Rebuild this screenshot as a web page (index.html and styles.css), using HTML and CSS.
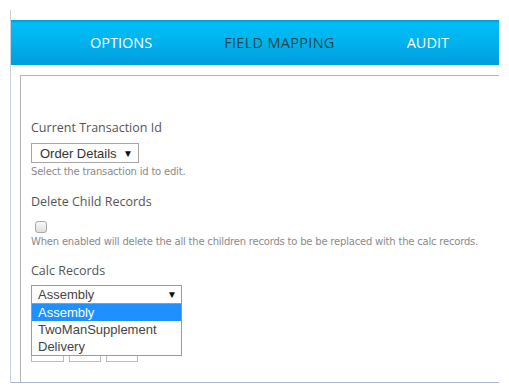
FILE: index.html
```html
<!DOCTYPE html>
<html>
<head>
<meta charset="utf-8">
<link rel="stylesheet" href="styles.css">
</head>
<body>
<div class="frame">
  <nav class="tabs">
    <span class="tab">OPTIONS</span>
    <span class="tab active">FIELD MAPPING</span>
    <span class="tab">AUDIT</span>
  </nav>
  <div class="panel">
    <div class="field">
      <div class="label">Current Transaction Id</div>
      <div class="select small"><span>Order Details</span><span class="arrow">&#9660;</span></div>
      <div class="help">Select the transaction id to edit.</div>
    </div>
    <div class="field">
      <div class="label">Delete Child Records</div>
      <span class="checkbox"></span>
      <div class="help">When enabled will delete the all the children records to be be replaced with the calc records.</div>
    </div>
    <div class="field">
      <div class="label">Calc Records</div>
      <div class="select-wrap">
        <div class="select wide focus"><span>Assembly</span><span class="arrow">&#9660;</span></div>
        <ul class="dropdown">
          <li class="selected">Assembly</li>
          <li>TwoManSupplement</li>
          <li>Delivery</li>
        </ul>
      </div>
    </div>
    <div class="buttons">
      <span class="btn b1"></span>
      <span class="btn b2"></span>
      <span class="btn b3"></span>
    </div>
  </div>
  <span class="scrollmark"></span>
</div>
</body>
</html>
```

FILE: styles.css
```css
html, body {
  margin: 0;
  padding: 0;
  background: #ffffff;
}
body {
  font-family: "Open Sans", "DejaVu Sans", sans-serif;
}
.frame {
  position: relative;
  margin: 10px 0 0 10px;
  width: 488px;
  border-left: 1px solid #c9d3e0;
  border-bottom: 1px solid #aab6cc;
  padding-top: 10px;
  overflow: hidden;
}
.tabs {
  height: 45px;
  display: flex;
  align-items: center;
  gap: 72px;
  padding-left: 79px;
  box-sizing: border-box;
  background: linear-gradient(to bottom, #0399d8 0px, #00bdf8 3px, #00b4ee 20px, #009ddc 45px);
}
.tab {
  font-size: 14.5px;
  color: #ffffff;
}
.tab.active {
  color: #24484f;
  letter-spacing: 0.3px;
}
.panel {
  margin: 10px 0 0 9px;
  border-top: 1px solid #b4b4b4;
  border-left: 1px solid #b4b4b4;
  padding: 43px 10px 20px 10px;
  width: 520px;
}
.field {
  display: flex;
  flex-direction: column;
  align-items: flex-start;
  margin-bottom: 14px;
}
.field:nth-child(2) {
  margin-bottom: 13px;
}
.label {
  font-size: 12.5px;
  line-height: 18px;
  color: #555555;
}
.select {
  margin-top: 6px;
  box-sizing: border-box;
  display: flex;
  align-items: center;
  justify-content: space-between;
  font-family: "Liberation Sans", Arial, sans-serif;
  font-size: 13px;
  color: #333333;
  background: #ffffff;
  border: 1px solid #a6a6a6;
}
.select.small {
  width: 108px;
  height: 20px;
  padding: 0 5px 0 8px;
}
.select.wide {
  width: 151px;
  height: 19px;
  padding: 0 4px 0 6px;
  margin-top: 0;
}
.select.focus {
  border-color: #7b9ed6;
  color: #444444;
}
.arrow {
  font-size: 10px;
  color: #111111;
}
.help {
  margin-top: 2px;
  font-family: "DejaVu Sans", sans-serif;
  font-size: 10px;
  line-height: 14px;
  color: #8a8a8a;
  letter-spacing: -0.2px;
}
.checkbox {
  margin: 10px 0 0 4px;
  width: 12px;
  height: 12px;
  box-sizing: border-box;
  border: 1px solid #a9a9a9;
  border-radius: 3px;
  background: linear-gradient(to bottom, #fafafa, #dedede);
}
.select-wrap {
  position: relative;
  margin-top: 5px;
}
.dropdown {
  position: absolute;
  left: 0;
  top: 100%;
  width: 151px;
  box-sizing: border-box;
  margin: -1px 0 0 0;
  padding: 0;
  list-style: none;
  border: 1px solid #7b9ed6;
  background: #ffffff;
  font-family: "Liberation Sans", Arial, sans-serif;
  font-size: 13px;
  color: #444444;
  z-index: 2;
}
.dropdown li {
  height: 17px;
  line-height: 17px;
  padding-left: 6px;
}
.dropdown li.selected {
  background: #1e90ff;
  color: #ffffff;
}
.buttons {
  display: flex;
  gap: 5px;
  margin-top: 36px;
}
.btn {
  height: 22px;
  box-sizing: border-box;
  border: 1px solid #bdbdbd;
}
.b1 { width: 33px; }
.b2 { width: 32px; }
.b3 { width: 32px; }
.scrollmark {
  position: absolute;
  left: 258px;
  bottom: -1px;
  width: 6px;
  height: 1px;
  background: #444444;
}
```
